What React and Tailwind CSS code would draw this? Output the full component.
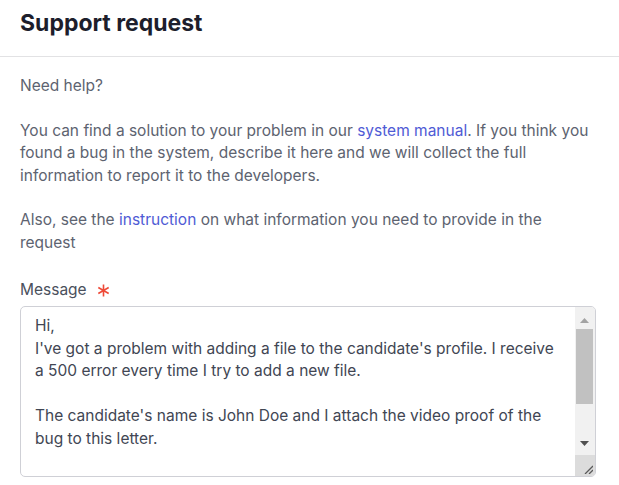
const message = `Hi,
I've got a problem with adding a file to the candidate's profile. I receive a 500 error every time I try to add a new file.

The candidate's name is John Doe and I attach the video proof of the bug to this letter.

Steps to reproduce:
1. Open the candidate's profile.
2. Click "Add file" and choose any file.
3. Press "Upload".

Thanks in advance,
Anna`

function Scrollbar() {
  return (
    <div className="flex w-[20px] shrink-0 flex-col bg-[#f1f1f1]">
      <div className="flex h-[22px] items-end justify-center pb-[6px] pr-[2px]">
        <svg width="9" height="5" viewBox="0 0 9 5">
          <path d="M0 5 L4.5 0 L9 5 Z" fill="#a3a3a3" />
        </svg>
      </div>
      <div className="flex-1">
        <div className="ml-[1px] mr-[2px] h-[75px] bg-[#c1c1c1]" />
      </div>
      <div className="flex h-[22px] items-start justify-center pt-[8px] pr-[2px]">
        <svg width="9" height="5" viewBox="0 0 9 5">
          <path d="M0 0 L9 0 L4.5 5 Z" fill="#505050" />
        </svg>
      </div>
      <div className="flex h-[21px] items-end justify-end bg-[#dcdcdc] pb-[2px] pr-[2px]">
        <svg width="9" height="9" viewBox="0 0 9 9">
          <path d="M1 9 L9 1 M5 9 L9 5" stroke="#5a5a5a" strokeWidth="1.3" />
        </svg>
      </div>
    </div>
  )
}

export default function App() {
  return (
    <div className="min-h-screen bg-white font-['Inter','Liberation_Sans',sans-serif] text-[15.5px] text-[#5d6370]">
      <div className="h-[57px] border-b border-[#e2e2e4] px-5 pt-[7px]">
        <h1 className="text-[23px] font-bold leading-8 text-[#1d1e2c]">Support request</h1>
      </div>
      <div className="pl-5 pr-[23px] pt-[18px] leading-[22.5px]">
        <p>Need help?</p>
        <p className="mt-[22px]">
          You can find a solution to your problem in our{' '}
          <a href="#" className="text-[#4f5bd5]">system manual</a>. If you think you found a bug in the system,
          describe it here and we will collect the full information to report it to the developers.
        </p>
        <p className="mt-[22px]">
          Also, see the <a href="#" className="text-[#4f5bd5]">instruction</a> on what information you need to
          provide in the request
        </p>
        <label className="mt-[25px] flex h-[22px] items-center gap-[10px] text-[#4a505c]">
          Message
          <svg width="13" height="13" viewBox="0 0 13 13">
            <path d="M6.5 0.5 V12.5 M1.3 3.5 L11.7 9.5 M1.3 9.5 L11.7 3.5" stroke="#ee4a38" strokeWidth="1.6" />
          </svg>
        </label>
        <div className="mt-[5px] flex h-[171px] overflow-hidden rounded-[5px] border border-[#cfd0d6]">
          <textarea
            defaultValue={message}
            className="h-full min-w-0 flex-1 resize-none overflow-hidden bg-transparent pl-[14px] pr-[14px] pt-2 leading-[22.5px] text-[#414653] outline-none"
          />
          <Scrollbar />
        </div>
      </div>
    </div>
  )
}
